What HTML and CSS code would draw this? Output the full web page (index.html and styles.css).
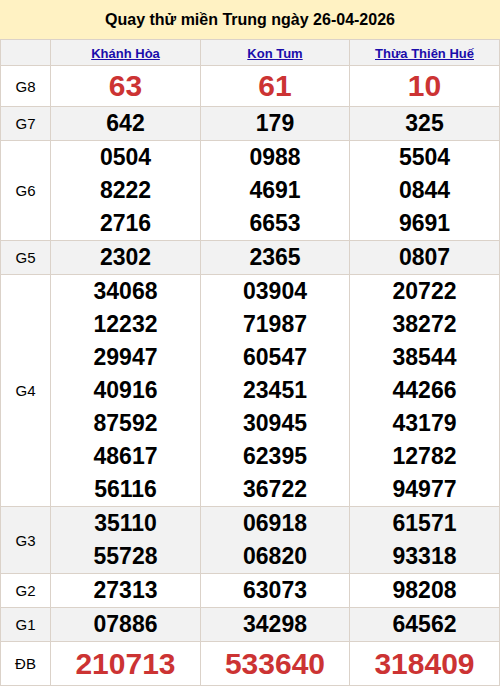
FILE: index.html
```html
<!DOCTYPE html>
<html lang="vi">
<head>
<meta charset="utf-8">
<link rel="stylesheet" href="styles.css">
</head>
<body>
<div class="title">Quay thử miền Trung ngày 26-04-2026</div>
<table class="kq">
  <colgroup><col class="c0"><col class="c1"><col class="c2"><col class="c3"></colgroup>
  <tr class="head alt"><td></td><td><a href="#">Khánh Hòa</a></td><td><a href="#">Kon Tum</a></td><td><a href="#">Thừa Thiên Huế</a></td></tr>
  <tr class="g8"><td class="lbl">G8</td><td><div class="big">63</div></td><td><div class="big">61</div></td><td><div class="big">10</div></td></tr>
  <tr class="alt"><td class="lbl">G7</td><td><div class="n">642</div></td><td><div class="n">179</div></td><td><div class="n">325</div></td></tr>
  <tr><td class="lbl">G6</td>
    <td><div class="n">0504</div><div class="n">8222</div><div class="n">2716</div></td>
    <td><div class="n">0988</div><div class="n">4691</div><div class="n">6653</div></td>
    <td><div class="n">5504</div><div class="n">0844</div><div class="n">9691</div></td></tr>
  <tr class="alt"><td class="lbl">G5</td><td><div class="n">2302</div></td><td><div class="n">2365</div></td><td><div class="n">0807</div></td></tr>
  <tr><td class="lbl">G4</td>
    <td><div class="n">34068</div><div class="n">12232</div><div class="n">29947</div><div class="n">40916</div><div class="n">87592</div><div class="n">48617</div><div class="n">56116</div></td>
    <td><div class="n">03904</div><div class="n">71987</div><div class="n">60547</div><div class="n">23451</div><div class="n">30945</div><div class="n">62395</div><div class="n">36722</div></td>
    <td><div class="n">20722</div><div class="n">38272</div><div class="n">38544</div><div class="n">44266</div><div class="n">43179</div><div class="n">12782</div><div class="n">94977</div></td></tr>
  <tr class="alt"><td class="lbl">G3</td>
    <td><div class="n">35110</div><div class="n">55728</div></td>
    <td><div class="n">06918</div><div class="n">06820</div></td>
    <td><div class="n">61571</div><div class="n">93318</div></td></tr>
  <tr><td class="lbl">G2</td><td><div class="n">27313</div></td><td><div class="n">63073</div></td><td><div class="n">98208</div></td></tr>
  <tr class="alt"><td class="lbl">G1</td><td><div class="n">07886</div></td><td><div class="n">34298</div></td><td><div class="n">64562</div></td></tr>
  <tr class="db"><td class="lbl">ĐB</td><td><div class="big db-n">210713</div></td><td><div class="big db-n">533640</div></td><td><div class="big db-n">318409</div></td></tr>
</table>
</body>
</html>
```
FILE: styles.css
```css
html, body {
  margin: 0;
  padding: 0;
  background: #fff;
  font-family: "Liberation Sans", Arial, sans-serif;
  color: #000;
}
.title {
  height: 39px;
  line-height: 39px;
  background: #fff2c3;
  text-align: center;
  font-weight: bold;
  font-size: 16px;
}
.kq {
  width: 500px;
  border-collapse: collapse;
  table-layout: fixed;
}
.c0 { width: 50px; }
.c1 { width: 150px; }
.c2 { width: 149px; }
.c3 { width: 150px; }
.kq td {
  border: 1px solid #dbd2c9;
  padding: 0;
  text-align: center;
  vertical-align: middle;
}
.alt td { background: #f2f2f2; }
.head td { height: 25px; }
.head a {
  color: #1a0dab;
  font-weight: bold;
  font-size: 13px;
  text-decoration: underline;
}
.lbl {
  font-size: 15px;
}
.n {
  font-weight: bold;
  font-size: 23px;
  line-height: 33px;
}
.big {
  font-weight: bold;
  font-size: 30px;
  line-height: 40px;
  color: #cc3333;
}
.db-n { line-height: 43px; }
```
